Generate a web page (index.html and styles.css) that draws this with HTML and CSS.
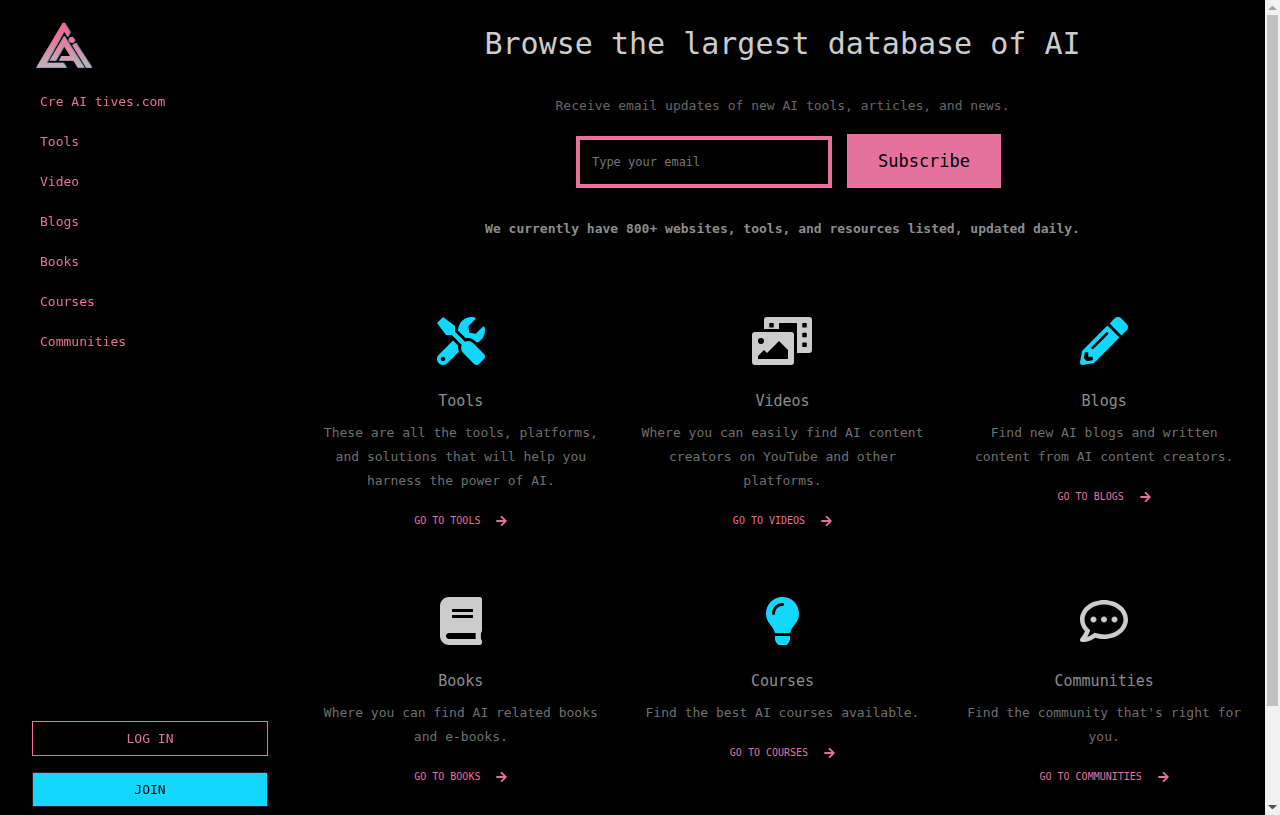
FILE: index.html
```html
<!DOCTYPE html>
<html lang="en">
<head>
    <meta charset="UTF-8">
    <meta name="viewport" content="width=device-width, initial-scale=1">
    <title>Cre AI tives.com</title>
    <link rel="stylesheet" href="styles.css">
</head>
<body>
    <div class="page">
        <aside class="sidebar">
            <a class="logo" href="#" aria-label="Home">
                <svg viewBox="0 0 168 138" width="56" height="46">
                    <defs>
                        <linearGradient id="logoFill" gradientUnits="userSpaceOnUse" x1="0" y1="0" x2="0" y2="138">
                            <stop offset="0" stop-color="#ff5f8a"/>
                            <stop offset="0.45" stop-color="#e2809b"/>
                            <stop offset="1" stop-color="#bcb4bc"/>
                        </linearGradient>
                        <g id="mark">
                            <path d="M0 137L80 2h5l17 28-7 16-11-18-52 94h50l9 15z"/>
                            <path d="M40 116L84 41l61 96h-20l-13-21H68l8-14h26L84 73l-25 43z"/>
                            <path d="M101 46l8-2 7 11-6 9-9-3-4-7z"/>
                            <path d="M108 69l11-7 49 75h-18z"/>
                        </g>
                    </defs>
                    <use href="#mark" x="3" fill="#3c8796"/>
                    <use href="#mark" fill="url(#logoFill)"/>
                </svg>
            </a>
            <nav class="menu">
                <a href="#">Cre AI tives.com</a>
                <a href="#">Tools</a>
                <a href="#">Video</a>
                <a href="#">Blogs</a>
                <a href="#">Books</a>
                <a href="#">Courses</a>
                <a href="#">Communities</a>
            </nav>
            <div class="account">
                <button type="button" class="btn btn-login">LOG IN</button>
                <button type="button" class="btn btn-join">JOIN</button>
            </div>
        </aside>

        <main class="content">
            <h1>Browse the largest database of AI</h1>
            <p class="intro">Receive email updates of new AI tools, articles, and news.</p>
            <form class="subscribe">
                <input type="email" id="email" name="email" placeholder="Type your email" aria-label="Type your email">
                <button type="submit">Subscribe</button>
            </form>
            <p class="count">We currently have 800+ websites, tools, and resources listed, updated daily.</p>

            <svg width="0" height="0" class="sprite" aria-hidden="true">
                <symbol id="arrow" viewBox="0 0 448 512">
                    <path d="M190.500 66.900l22.200-22.200c9.400-9.400 24.600-9.400 33.900 0L441 239c9.400 9.400 9.400 24.600 0 33.900L246.600 467.300c-9.400 9.400-24.600 9.400-33.900 0l-22.200-22.200c-9.500-9.500-9.300-25 .4-34.300L311.400 296H24c-13.300 0-24-10.700-24-24v-32c0-13.300 10.700-24 24-24h287.400L190.900 101.200c-9.800-9.300-10-24.800-.4-34.300z"/>
                </symbol>
            </svg>

            <section class="cards">
                <article class="card">
                    <svg class="icon blue" viewBox="0 0 512 512"><path d="M501.100 395.700L384 278.600c-23.100-23.100-57.600-27.600-85.400-13.900L192 158.100V96L64 0 0 64l96 128h62.100l106.600 106.600c-13.600 27.800-9.200 62.300 13.900 85.400l117.100 117.100c14.600 14.600 38.200 14.600 52.700 0l52.700-52.700c14.500-14.600 14.500-38.200 0-52.700zM331.700 225c28.300 0 54.900 11 74.900 31l19.400 19.400c15.800-6.900 30.800-16.500 43.800-29.500 37.100-37.100 49.700-89.300 37.900-136.700-2.200-9-13.500-12.100-20.100-5.500l-74.400 74.400-67.900-11.300L334 98.900l74.400-74.400c6.600-6.600 3.400-17.900-5.700-20.200-47.400-11.700-99.600.9-136.600 37.900-28.500 28.500-41.900 66.100-41.200 103.600l82.100 82.100c8.100-1.900 16.500-2.900 24.700-2.900zm-103.900 82l-56.700-56.700L18.700 402.800c-25 25-25 65.500 0 90.500s65.500 25 90.500 0l123.600-123.600c-7.600-19.900-9.900-41.600-5-62.700zM64 472c-13.200 0-24-10.800-24-24 0-13.300 10.700-24 24-24s24 10.700 24 24c0 13.200-10.700 24-24 24z"/></svg>
                    <h2>Tools</h2>
                    <p>These are all the tools, platforms, and solutions that will help you harness the power of AI.</p>
                    <a href="#">GO TO TOOLS <svg class="arrow"><use href="#arrow"/></svg></a>
                </article>
                <article class="card">
                    <svg class="icon" viewBox="0 0 640 512"><path d="M608 0H160a32 32 0 0 0-32 32v96h160V64h192v320h128a32 32 0 0 0 32-32V32a32 32 0 0 0-32-32zM232 103a9 9 0 0 1-9 9h-30a9 9 0 0 1-9-9V73a9 9 0 0 1 9-9h30a9 9 0 0 1 9 9zm352 208a9 9 0 0 1-9 9h-30a9 9 0 0 1-9-9v-30a9 9 0 0 1 9-9h30a9 9 0 0 1 9 9zm0-104a9 9 0 0 1-9 9h-30a9 9 0 0 1-9-9v-30a9 9 0 0 1 9-9h30a9 9 0 0 1 9 9zm0-104a9 9 0 0 1-9 9h-30a9 9 0 0 1-9-9V73a9 9 0 0 1 9-9h30a9 9 0 0 1 9 9zm-168 57H32a32 32 0 0 0-32 32v288a32 32 0 0 0 32 32h384a32 32 0 0 0 32-32V192a32 32 0 0 0-32-32zM96 224a32 32 0 1 1-32 32 32 32 0 0 1 32-32zm288 224H64v-32l64-64 32 32 128-128 96 96z"/></svg>
                    <h2>Videos</h2>
                    <p>Where you can easily find AI content creators on YouTube and other platforms.</p>
                    <a href="#">GO TO VIDEOS <svg class="arrow"><use href="#arrow"/></svg></a>
                </article>
                <article class="card">
                    <svg class="icon blue" viewBox="0 0 512 512"><path d="M497.900 142.100l-46.100 46.100c-4.700 4.700-12.300 4.700-17 0l-111-111c-4.700-4.700-4.700-12.300 0-17l46.100-46.100c18.700-18.700 49.100-18.700 67.900 0l60.100 60.100c18.800 18.700 18.800 49.100 0 67.900zM284.200 99.800L21.600 362.400.4 483.900c-2.900 16.400 11.400 30.600 27.800 27.800l121.500-21.300 262.600-262.600c4.700-4.700 4.700-12.300 0-17l-111-111c-4.800-4.700-12.400-4.700-17.100 0zM124.100 339.900c-5.500-5.500-5.500-14.300 0-19.800l154-154c5.500-5.500 14.300-5.500 19.800 0s5.500 14.300 0 19.800l-154 154c-5.500 5.500-14.300 5.500-19.800 0zM88 424h48v36.300l-64.500 11.300-31.100-31.100L51.700 376H88v48z"/></svg>
                    <h2>Blogs</h2>
                    <p>Find new AI blogs and written content from AI content creators.</p>
                    <a href="#">GO TO BLOGS <svg class="arrow"><use href="#arrow"/></svg></a>
                </article>
                <article class="card">
                    <svg class="icon" viewBox="0 0 448 512"><path d="M448 360V24c0-13.300-10.700-24-24-24H96C43 0 0 43 0 96v320c0 53 43 96 96 96h328c13.300 0 24-10.700 24-24v-16c0-7.500-3.500-14.300-8.900-18.700-4.200-15.400-4.200-59.300 0-74.700 5.400-4.300 8.900-11.100 8.900-18.600zM128 134c0-3.300 2.700-6 6-6h212c3.300 0 6 2.700 6 6v20c0 3.300-2.700 6-6 6H134c-3.300 0-6-2.700-6-6v-20zm0 64c0-3.300 2.700-6 6-6h212c3.300 0 6 2.700 6 6v20c0 3.300-2.700 6-6 6H134c-3.300 0-6-2.700-6-6v-20zm253.400 250H96c-17.700 0-32-14.300-32-32 0-17.600 14.400-32 32-32h285.400c-1.900 17.100-1.900 46.900 0 64z"/></svg>
                    <h2>Books</h2>
                    <p>Where you can find AI related books and e-books.</p>
                    <a href="#">GO TO BOOKS <svg class="arrow"><use href="#arrow"/></svg></a>
                </article>
                <article class="card">
                    <svg class="icon blue" viewBox="0 0 352 512"><path d="M96.060 454.350c.01 6.290 1.870 12.450 5.360 17.690l17.090 25.690a31.990 31.990 0 0 0 26.640 14.280h61.710a31.990 31.990 0 0 0 26.640-14.280l17.090-25.690a31.990 31.990 0 0 0 5.360-17.690l.04-38.350H96.010l.05 38.350zM0 176c0 44.370 16.450 84.850 43.560 115.780 16.520 18.850 42.360 58.230 52.210 91.450.04.26.07.52.11.78h160.240c.04-.26.07-.51.11-.78 9.850-33.220 35.690-72.600 52.210-91.450C335.550 260.850 352 220.370 352 176 352 78.610 272.910-.3 175.450 0 73.440.31 0 82.970 0 176zm176-80c-44.110 0-80 35.890-80 80 0 8.840-7.160 16-16 16s-16-7.160-16-16c0-61.760 50.240-112 112-112 8.840 0 16 7.160 16 16s-7.160 16-16 16z"/></svg>
                    <h2>Courses</h2>
                    <p>Find the best AI courses available.</p>
                    <a href="#">GO TO COURSES <svg class="arrow"><use href="#arrow"/></svg></a>
                </article>
                <article class="card">
                    <svg class="icon" viewBox="0 0 512 512"><path d="M144 208c-17.700 0-32 14.300-32 32s14.300 32 32 32 32-14.300 32-32-14.300-32-32-32zm112 0c-17.700 0-32 14.300-32 32s14.300 32 32 32 32-14.300 32-32-14.300-32-32-32zm112 0c-17.700 0-32 14.300-32 32s14.300 32 32 32 32-14.300 32-32-14.300-32-32-32zM256 32C114.600 32 0 125.100 0 240c0 47.600 19.900 91.200 52.900 126.300C38 405.700 7 439.100 6.500 439.500c-6.600 7-8.400 17.200-4.600 26S14.400 480 24 480c61.500 0 110-25.700 139.100-46.300C192 442.800 223.200 448 256 448c141.400 0 256-93.100 256-208S397.400 32 256 32zm0 368c-26.700 0-53.100-4.100-78.400-12.100l-22.700-7.200-19.500 13.800c-14.300 10.100-33.900 21.400-57.500 29 7.300-12.100 14.400-25.700 19.900-40.200l10.600-28.100-20.600-21.800C69.700 314.100 48 282.200 48 240c0-88.200 93.300-160 208-160s208 71.800 208 160-93.300 160-208 160z"/></svg>
                    <h2>Communities</h2>
                    <p>Find the community that's right for you.</p>
                    <a href="#">GO TO COMMUNITIES <svg class="arrow"><use href="#arrow"/></svg></a>
                </article>
            </section>
        </main>
    </div>

    <div class="scrollbar" aria-hidden="true">
        <svg viewBox="0 0 15 15"><path d="M7 6h1l4 4H3z" fill="#a3a3a3"/></svg>
        <div class="track"><div class="thumb"></div></div>
        <svg viewBox="0 0 15 15"><path d="M3 5h9L8 9H7z" fill="#505050"/></svg>
    </div>
</body>
</html>
```
FILE: styles.css
```css
* {
    box-sizing: border-box;
}

body {
    display: flex;
    height: 100vh;
    margin: 0;
    background-color: #000;
    color: #7b7b7b;
    font-family: "DejaVu Sans Mono", monospace;
    font-size: 13px;
    line-height: 24px;
}

h1, h2, p {
    margin: 0;
    font-weight: normal;
}

a {
    color: #e4729d;
    text-decoration: none;
}

button, input {
    font-family: inherit;
    border-radius: 0;
}

button {
    cursor: pointer;
}

.page {
    display: flex;
    flex: 1;
    align-items: flex-start;
    min-width: 0;
    overflow-y: auto;
    scrollbar-width: none;
}

/* Scrollbar */
.scrollbar {
    display: flex;
    flex-direction: column;
    flex: 0 0 15px;
    background-color: #f1f1f1;
}

.scrollbar svg {
    width: 15px;
    height: 15px;
}

.track {
    flex: 1;
    padding: 0 2px;
}

.thumb {
    height: 88%;
    background-color: #c1c1c1;
}

/* Sidebar */
.sidebar {
    position: sticky;
    top: 0;
    display: flex;
    flex-direction: column;
    flex: 0 0 300px;
    height: 100vh;
    padding: 22px 32px 8px;
}

.logo {
    display: flex;
    padding-left: 4px;
}

.menu {
    display: flex;
    flex-direction: column;
    gap: 16px;
    padding: 22px 8px 0;
}

.account {
    display: grid;
    gap: 16px;
    margin-top: auto;
}

.btn {
    height: 35px;
    border: 1px solid #e4729d;
    font-size: 13px;
}

.btn-login {
    background-color: #000;
    color: #e4729d;
}

.btn-join {
    background-color: #12d8ff;
    border-color: #222;
    color: #000;
}

/* Main content */
.content {
    flex: 1;
    min-width: 0;
    padding: 24px 0 80px;
    text-align: center;
}

h1 {
    color: #ccc;
    font-size: 30px;
    line-height: 40px;
}

.intro {
    margin-top: 30px;
    color: #666;
}

.subscribe {
    display: flex;
    justify-content: center;
    align-items: flex-end;
    gap: 15px;
    margin-top: 16px;
    padding-left: 12px;
}

.subscribe input {
    width: 256px;
    height: 52px;
    padding: 0 12px;
    background-color: #000;
    border: 4px solid #e4729d;
    color: #ccc;
    font-size: 12px;
}

.subscribe input::placeholder {
    color: #757575;
}

.subscribe button {
    height: 54px;
    padding: 0 31px;
    background-color: #e4729d;
    border: none;
    color: #000;
    font-size: 17px;
}

.count {
    margin-top: 29px;
    color: #8c8c8c;
    font-weight: bold;
}

.sprite {
    position: absolute;
}

.cards {
    display: grid;
    grid-template-columns: repeat(3, 1fr);
    margin-top: 44px;
}

.card {
    display: flex;
    flex-direction: column;
    align-items: center;
    padding: 32px 18px;
}

.icon {
    height: 48px;
    fill: #ccc;
}

.icon.blue {
    fill: #12d8ff;
}

h2 {
    margin: 24px 0 8px;
    color: #8c8c8c;
    font-size: 15px;
}

.card p {
    color: #6f6f6f;
}

.card a {
    display: flex;
    align-items: center;
    gap: 16px;
    margin-top: 16px;
    font-size: 10px;
}

.arrow {
    width: 11px;
    height: 12px;
    fill: #e4729d;
}
```
